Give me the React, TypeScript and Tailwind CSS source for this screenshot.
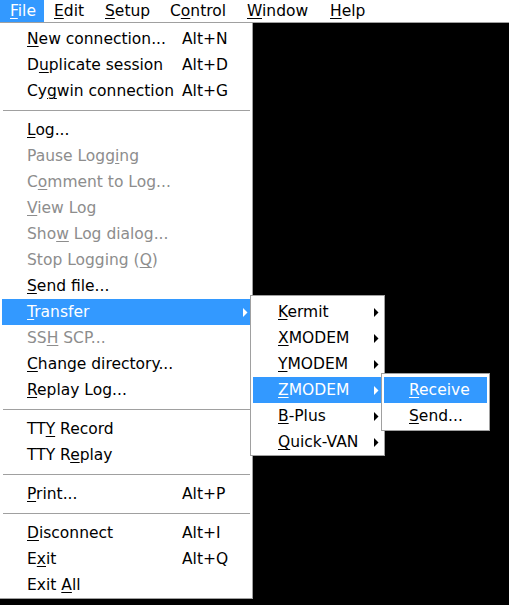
import React from "react";

type Row =
  | "sep"
  | {
      label: string;
      u: number;
      shortcut?: string;
      disabled?: boolean;
      arrow?: boolean;
      active?: boolean;
    };

const fileMenu: Row[] = [
  { label: "New connection...", u: 0, shortcut: "Alt+N" },
  { label: "Duplicate session", u: 1, shortcut: "Alt+D" },
  { label: "Cygwin connection", u: 2, shortcut: "Alt+G" },
  "sep",
  { label: "Log...", u: 0 },
  { label: "Pause Logging", u: 10, disabled: true },
  { label: "Comment to Log...", u: 1, disabled: true },
  { label: "View Log", u: 0, disabled: true },
  { label: "Show Log dialog...", u: 3, disabled: true },
  { label: "Stop Logging (Q)", u: 14, disabled: true },
  { label: "Send file...", u: 0 },
  { label: "Transfer", u: 0, arrow: true, active: true },
  { label: "SSH SCP...", u: 2, disabled: true },
  { label: "Change directory...", u: 0 },
  { label: "Replay Log...", u: 0 },
  "sep",
  { label: "TTY Record", u: 2 },
  { label: "TTY Replay", u: 5 },
  "sep",
  { label: "Print...", u: 0, shortcut: "Alt+P" },
  "sep",
  { label: "Disconnect", u: 0, shortcut: "Alt+I" },
  { label: "Exit", u: 1, shortcut: "Alt+Q" },
  { label: "Exit All", u: 5 },
];

const transferMenu: Row[] = [
  { label: "Kermit", u: 0, arrow: true },
  { label: "XMODEM", u: 0, arrow: true },
  { label: "YMODEM", u: 0, arrow: true },
  { label: "ZMODEM", u: 0, arrow: true, active: true },
  { label: "B-Plus", u: 0, arrow: true },
  { label: "Quick-VAN", u: 0, arrow: true },
];

const zmodemMenu: Row[] = [
  { label: "Receive", u: 0, active: true },
  { label: "Send...", u: 0 },
];

const bar = [
  { label: "File", w: "w-[44px]" },
  { label: "Edit", w: "w-[51px]" },
  { label: "Setup", w: "w-[65px]" },
  { label: "Control", w: "w-[77px]", u: 1 },
  { label: "Window", w: "w-[83px]" },
  { label: "Help", w: "w-[60px]" },
];

function Mnemonic({ text, u }: { text: string; u: number }) {
  return (
    <span className="whitespace-pre">
      {text.slice(0, u)}
      <span className="underline decoration-1 underline-offset-[1.5px]">{text[u]}</span>
      {text.slice(u + 1)}
    </span>
  );
}

function Arrow({ white }: { white?: boolean }) {
  return (
    <svg width="5" height="9" viewBox="0 0 5 9" className="shrink-0">
      <polygon points="0,0 4.5,4.5 0,9" fill={white ? "#ffffff" : "#000000"} />
    </svg>
  );
}

function MenuRows({ rows, labelW, indent }: { rows: Row[]; labelW: string; indent: string }) {
  return (
    <>
      {rows.map((r, i) =>
        r === "sep" ? (
          <div key={i} className="h-[13px] flex items-center pl-px">
            <div className="h-px w-full bg-[#a0a0a0]" />
          </div>
        ) : (
          <div
            key={i}
            className={`h-[26px] flex items-center pt-[2px] ${indent} ${
              r.active ? "bg-[#3399ff] text-white" : r.disabled ? "text-[#8d8d8d]" : "text-black"
            }`}
          >
            <div className={`${labelW} shrink-0`}>
              <Mnemonic text={r.label} u={r.u} />
            </div>
            {r.shortcut && <div>{r.shortcut}</div>}
            {r.arrow && (
              <div className="ml-auto mr-[2px] -mt-[2px] flex items-center">
                <Arrow white={r.active} />
              </div>
            )}
          </div>
        )
      )}
    </>
  );
}

export default function App() {
  return (
    <div
      className="relative w-[509px] h-[605px] overflow-hidden bg-black text-[15.5px]"
      style={{ fontFamily: "'DejaVu Sans', sans-serif" }}
    >
      {/* Menu bar */}
      <div className="h-[23px] bg-white border-b border-[#a0a0a0] flex">
        {bar.map((b, i) => (
          <div
            key={b.label}
            className={`${b.w} h-[22px] leading-[22px] pl-[10px] ${
              i === 0 ? "bg-[#3399ff] text-white" : "text-black"
            }`}
          >
            <Mnemonic text={b.label} u={b.u ?? 0} />
          </div>
        ))}
      </div>

      {/* File menu */}
      <div className="w-[253px] h-[576px] bg-white border-r border-b border-[#a0a0a0] pt-[3px] pl-[2px] pr-[2px]">
        <MenuRows rows={fileMenu} labelW="w-[155px]" indent="pl-[25px]" />
      </div>

      {/* Transfer submenu */}
      <div className="absolute left-[250px] top-[295px] w-[135px] h-[161px] bg-white border border-[#a0a0a0] pt-[3px] pl-[2px] pr-[3px]">
        <MenuRows rows={transferMenu} labelW="w-[90px]" indent="pl-[25px]" />
      </div>

      {/* ZMODEM submenu */}
      <div className="absolute left-[381px] top-[373px] w-[109px] h-[58px] bg-white border border-[#a0a0a0] pt-[3px] pl-[2px] pr-[2px]">
        <MenuRows rows={zmodemMenu} labelW="w-[80px]" indent="pl-[25px]" />
      </div>
    </div>
  );
}
